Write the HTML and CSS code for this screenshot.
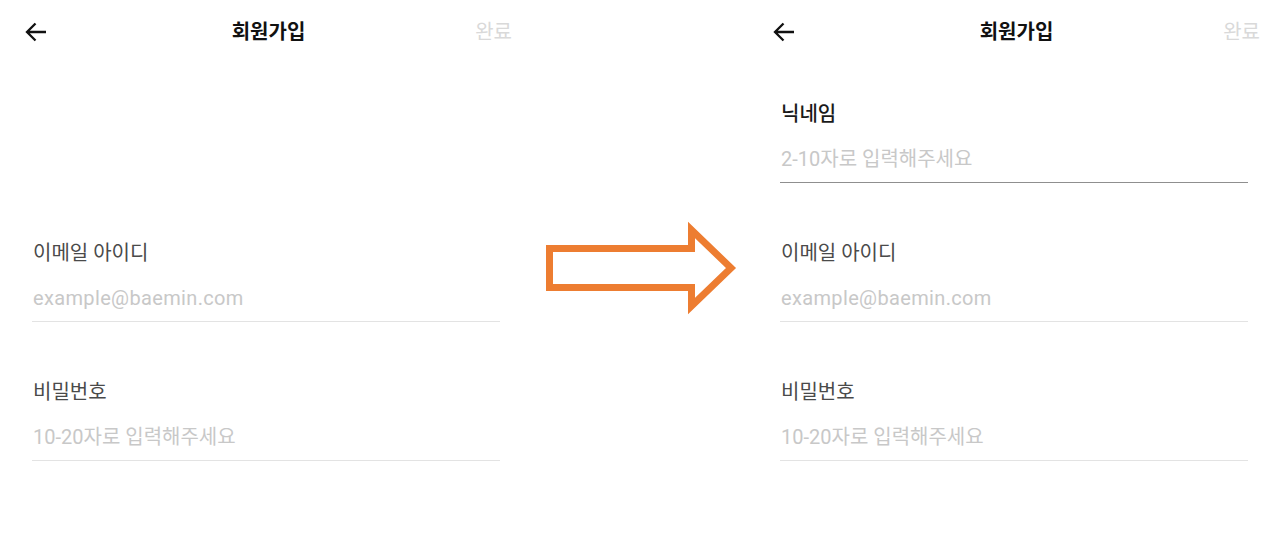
FILE: index.html
```html
<!DOCTYPE html>
<html lang="ko">
<head>
<meta charset="utf-8">
<title>회원가입</title>
<link rel="stylesheet" href="styles.css">
</head>
<body>
<div class="page">
  <section class="screen">
    <header class="topbar">
      <button class="back" aria-label="뒤로">
        <svg width="22" height="20" viewBox="0 0 22 20"><path d="M21 10H2M10.5 1.5L2 10l8.5 8.5" fill="none" stroke="#111" stroke-width="2.3" stroke-linecap="butt"/></svg>
      </button>
      <h1 class="title">회원가입</h1>
      <span class="done">완료</span>
    </header>
    <div class="form form-offset">
      <div class="field">
        <label class="label">이메일 아이디</label>
        <div class="input latin">example@baemin.com</div>
      </div>
      <div class="field">
        <label class="label">비밀번호</label>
        <div class="input">10-20자로 입력해주세요</div>
      </div>
    </div>
  </section>

  <div class="between">
    <svg class="big-arrow" width="194" height="96" viewBox="0 0 194 96">
      <polygon points="4.5,27.5 146.5,27.5 146.5,9 186,47 146.5,85 146.5,66.5 4.5,66.5" fill="none" stroke="#ed7d31" stroke-width="7" stroke-linejoin="miter"/>
    </svg>
  </div>

  <section class="screen">
    <header class="topbar">
      <button class="back" aria-label="뒤로">
        <svg width="22" height="20" viewBox="0 0 22 20"><path d="M21 10H2M10.5 1.5L2 10l8.5 8.5" fill="none" stroke="#111" stroke-width="2.3" stroke-linecap="butt"/></svg>
      </button>
      <h1 class="title">회원가입</h1>
      <span class="done">완료</span>
    </header>
    <div class="form">
      <div class="field active">
        <label class="label">닉네임</label>
        <div class="input">2-10자로 입력해주세요</div>
      </div>
      <div class="field">
        <label class="label">이메일 아이디</label>
        <div class="input latin">example@baemin.com</div>
      </div>
      <div class="field">
        <label class="label">비밀번호</label>
        <div class="input">10-20자로 입력해주세요</div>
      </div>
    </div>
  </section>
</div>
</body>
</html>
```

FILE: styles.css
```css
* { box-sizing: border-box; }
html, body { margin: 0; padding: 0; background: #fff; }
body {
  font-family: Roboto, "Noto Sans CJK KR", sans-serif;
  color: #222;
}
.page {
  display: flex;
  width: 1280px;
  height: 539px;
}
.screen {
  width: 532px;
  flex: none;
}
.between {
  width: 216px;
  flex: none;
  padding: 221px 0 0 13px;
}
.big-arrow { display: block; }

.topbar {
  height: 64px;
  display: grid;
  grid-template-columns: 1fr auto 1fr;
  align-items: center;
  padding: 0 20px 0 25px;
}
.back {
  justify-self: start;
  border: 0;
  background: none;
  padding: 0;
  margin: 0;
  width: 22px;
  height: 20px;
  display: flex;
}
.title {
  margin: 0;
  font-size: 20px;
  font-weight: 700;
  color: #111;
  line-height: 26px;
}
.done {
  justify-self: end;
  font-size: 20px;
  color: #d9d9d9;
  line-height: 26px;
}

.form {
  padding: 37px 32px 0 32px;
  display: flex;
  flex-direction: column;
  gap: 57px;
}
.form-offset { padding-top: 176px; }

.field {
  display: flex;
  flex-direction: column;
  border-bottom: 1px solid #e3e3e3;
  padding-bottom: 10px;
}
.label {
  font-size: 20px;
  line-height: 26px;
  color: #4a4a4a;
  padding-left: 1px;
}
.input {
  margin-top: 19px;
  font-size: 20px;
  line-height: 26px;
  color: #c8c8c8;
  padding-left: 1px;
}
.input.latin { letter-spacing: 0.35px; }
.field.active { border-bottom: 1.5px solid #8f8f8f; }
.field.active .label { color: #1a1a1a; font-weight: 500; }
```
